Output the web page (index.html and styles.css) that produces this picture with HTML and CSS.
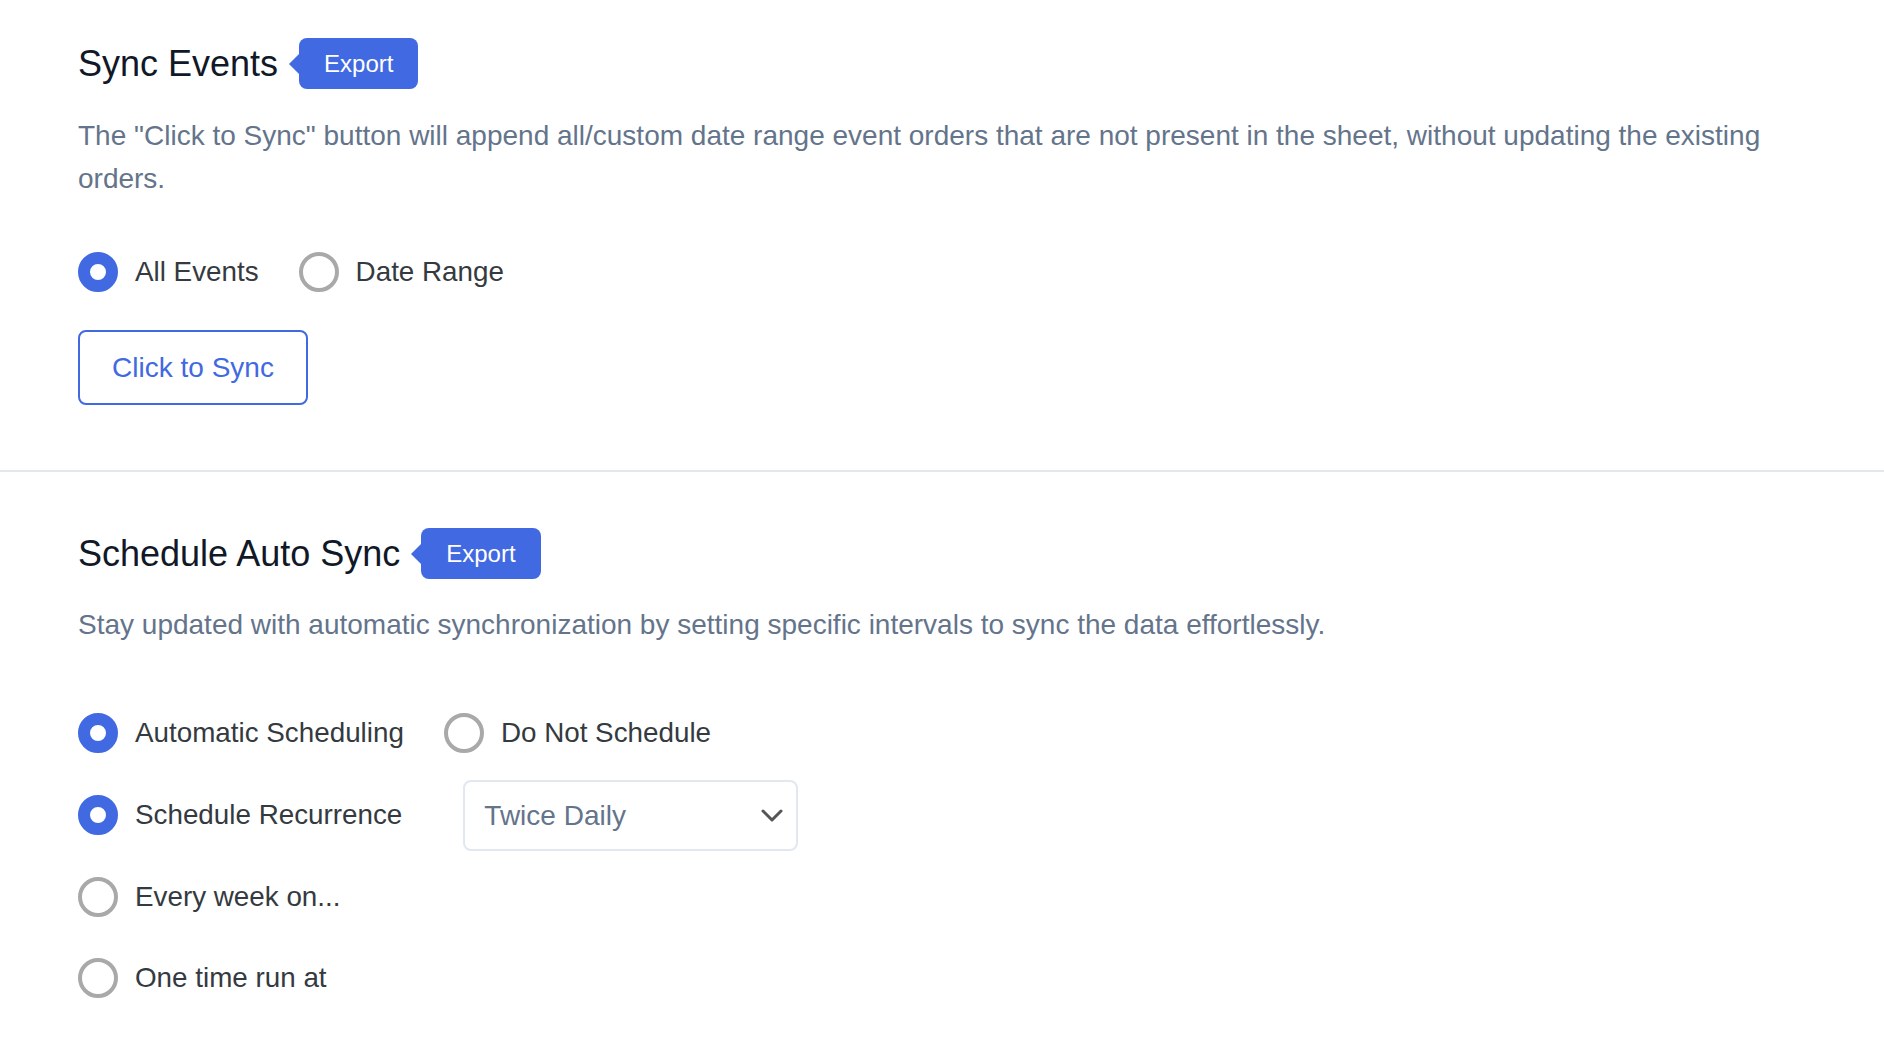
FILE: index.html
```html
<!DOCTYPE html>
<html lang="en">
<head>
<meta charset="utf-8">
<title>Sync Settings</title>
<link rel="stylesheet" href="styles.css">
</head>
<body>
<section class="section section-first">
  <div class="header">
    <h2 class="title">Sync Events</h2>
    <span class="badge">Export</span>
  </div>
  <p class="desc">The "Click to Sync" button will append all/custom date range event orders that are not present in the sheet, without updating the existing orders.</p>
  <div class="radio-row sync-choice">
    <label class="radio"><span class="dot checked"></span><span class="radio-text">All Events</span></label>
    <label class="radio"><span class="dot"></span><span class="radio-text">Date Range</span></label>
  </div>
  <button class="sync-btn" type="button">Click to Sync</button>
</section>
<hr class="divider">
<section class="section section-second">
  <div class="header">
    <h2 class="title">Schedule Auto Sync</h2>
    <span class="badge">Export</span>
  </div>
  <p class="desc desc-second">Stay updated with automatic synchronization by setting specific intervals to sync the data effortlessly.</p>
  <div class="options">
    <div class="radio-row">
      <label class="radio"><span class="dot checked"></span><span class="radio-text">Automatic Scheduling</span></label>
      <label class="radio radio-after"><span class="dot"></span><span class="radio-text">Do Not Schedule</span></label>
    </div>
    <div class="radio-row">
      <label class="radio"><span class="dot checked"></span><span class="radio-text">Schedule Recurrence</span></label>
      <div class="select">
        <span class="select-text">Twice Daily</span>
        <svg class="chevron" width="22" height="13" viewBox="0 0 22 13" aria-hidden="true"><path d="M2 2 L11 11 L20 2" fill="none" stroke="#555" stroke-width="3" stroke-linecap="round" stroke-linejoin="round"/></svg>
      </div>
    </div>
    <div class="radio-row">
      <label class="radio"><span class="dot"></span><span class="radio-text">Every week on...</span></label>
    </div>
    <div class="radio-row">
      <label class="radio"><span class="dot"></span><span class="radio-text">One time run at</span></label>
    </div>
  </div>
</section>
</body>
</html>
```
FILE: styles.css
```css
html, body {
  margin: 0;
  padding: 0;
  background: #ffffff;
  font-family: "Liberation Sans", Arial, Helvetica, sans-serif;
}

.section {
  padding: 0 78px;
}

.section-first {
  padding-top: 38px;
  padding-bottom: 65px;
}

.section-second {
  padding-top: 56px;
}

.header {
  display: flex;
  align-items: center;
  height: 51px;
}

.title {
  margin: 0;
  font-size: 36px;
  font-weight: 400;
  color: #111827;
  line-height: 1;
}

.badge {
  position: relative;
  display: flex;
  align-items: center;
  height: 51px;
  margin-left: 21px;
  padding: 0 25px;
  background: #4169e1;
  color: #ffffff;
  font-size: 24px;
  border-radius: 8px;
}

.badge::before {
  content: "";
  position: absolute;
  left: -10px;
  top: 50%;
  margin-top: -10px;
  border-top: 10px solid transparent;
  border-bottom: 10px solid transparent;
  border-right: 10px solid #4169e1;
}

.desc {
  margin: 25px 0 0;
  font-size: 28px;
  line-height: 43px;
  color: #64748b;
}

.desc-second {
  margin-top: 24px;
}

.radio-row {
  display: flex;
  align-items: center;
  min-height: 71px;
}

.sync-choice {
  min-height: 40px;
  margin-top: 52px;
}

.radio {
  display: flex;
  align-items: center;
  gap: 17px;
  cursor: pointer;
}

.radio + .radio {
  margin-left: 40px;
}

.radio-after {
  margin-left: 42px;
}

.dot {
  box-sizing: border-box;
  width: 40px;
  height: 40px;
  border-radius: 50%;
  border: 4px solid #a9a9a9;
  background: #ffffff;
  flex: none;
}

.dot.checked {
  border: 12px solid #4169e1;
}

.radio-text {
  font-size: 27.8px;
  color: #343a40;
  line-height: 40px;
}

.sync-btn {
  display: block;
  box-sizing: border-box;
  margin-top: 38px;
  width: 230px;
  height: 75px;
  border: 2px solid #4169e1;
  border-radius: 8px;
  background: #ffffff;
  color: #4169e1;
  font-family: "Liberation Sans", Arial, Helvetica, sans-serif;
  font-size: 28px;
  padding: 0;
  cursor: pointer;
}

.divider {
  margin: 0;
  border: 0;
  height: 2px;
  background: #e2e8f0;
}

.options {
  margin-top: 51px;
  display: flex;
  flex-direction: column;
  gap: 10px;
}

.select {
  box-sizing: border-box;
  display: flex;
  align-items: center;
  justify-content: space-between;
  width: 335px;
  height: 71px;
  margin-left: 61px;
  margin-top: 2px;
  padding: 0 13px 0 19px;
  border: 2px solid #e2e8f0;
  border-radius: 8px;
  background: #ffffff;
}

.select-text {
  font-size: 28px;
  color: #64748b;
}

.chevron {
  display: block;
}
```
